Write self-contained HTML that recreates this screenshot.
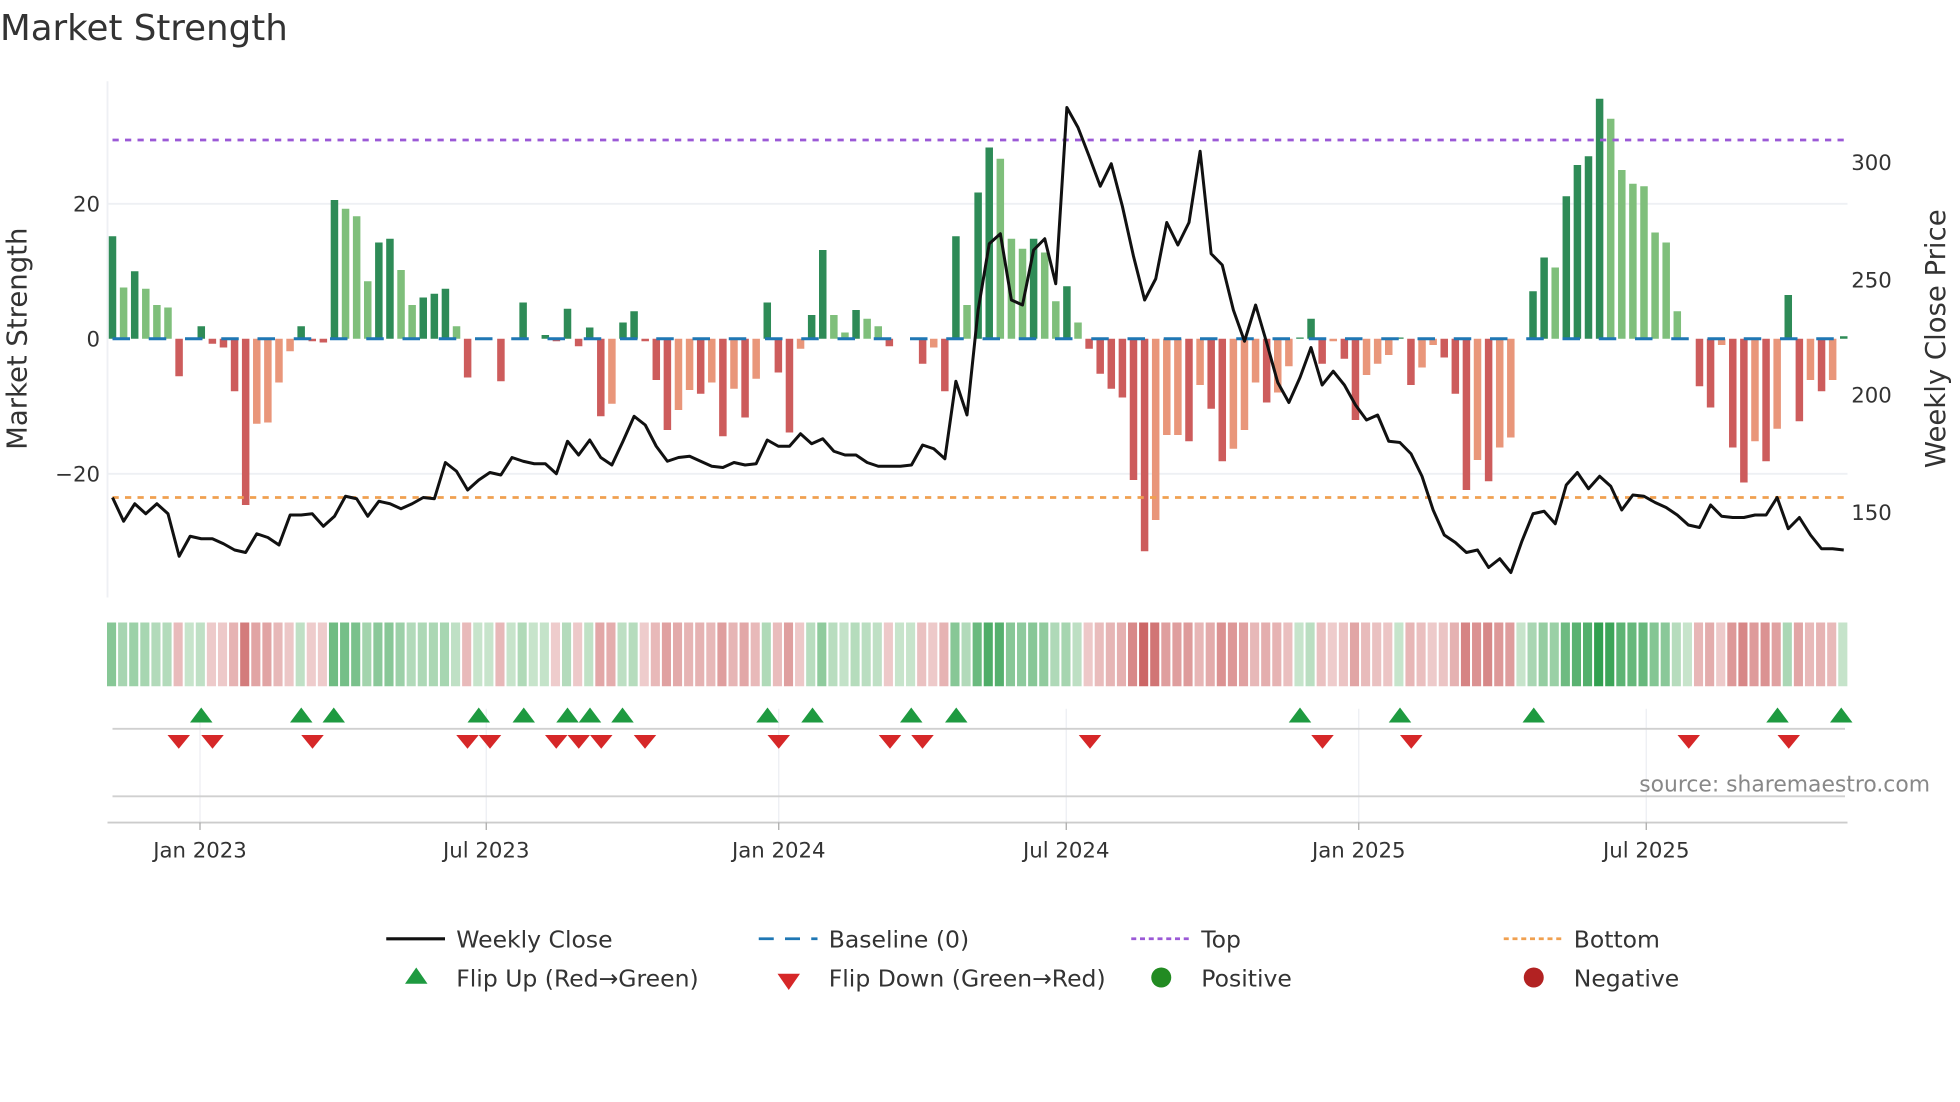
<!DOCTYPE html>
<html><head><meta charset="utf-8"><style>
html,body{margin:0;padding:0;background:#fff;}
svg{display:block;font-family:"DejaVu Sans","Liberation Sans",sans-serif;}
</style></head><body>
<svg id="s" width="1960" height="1102" viewBox="0 0 1568 881.6" preserveAspectRatio="none" xmlns="http://www.w3.org/2000/svg">
<text x="0" y="32" font-size="28.5" fill="#333">Market Strength</text>
<line x1="86" y1="65" x2="86" y2="478" stroke="#eef0f4" stroke-width="1.5"/>
<line x1="86" y1="163" x2="1478" y2="163" stroke="#eef0f4" stroke-width="1.5"/>
<line x1="86" y1="379" x2="1478" y2="379" stroke="#eef0f4" stroke-width="1.5"/>
<g font-size="17" fill="#333" text-anchor="end">
<text x="80" y="169">20</text><text x="80" y="277">0</text><text x="80" y="385">−20</text>
</g>
<g font-size="17" fill="#333">
<text x="1481" y="136">300</text><text x="1481" y="230">250</text><text x="1481" y="322">200</text><text x="1481" y="416">150</text>
</g>
<text transform="translate(21,271) rotate(-90)" font-size="22" fill="#333" text-anchor="middle">Market Strength</text>
<text transform="translate(1556,271) rotate(-90)" font-size="22" fill="#333" text-anchor="middle">Weekly Close Price</text>
<g id="bars"></g>
<line x1="90" y1="271" x2="1476" y2="271" stroke="#1f77b4" stroke-width="2.4" stroke-dasharray="14,15"/>
<line x1="90" y1="112" x2="1476" y2="112" stroke="#9b59d6" stroke-width="2.2" stroke-dasharray="5,5"/>
<line x1="90" y1="398" x2="1476" y2="398" stroke="#f0a050" stroke-width="2.2" stroke-dasharray="5,5"/>
<polyline id="close" fill="none" stroke="#111" stroke-width="2.4" stroke-linejoin="round"/>
<g id="heat"></g>
<g stroke="#eceef2" stroke-width="1">
<line x1="160" y1="567" x2="160" y2="658"/><line x1="389" y1="567" x2="389" y2="658"/><line x1="623" y1="567" x2="623" y2="658"/><line x1="853" y1="567" x2="853" y2="658"/><line x1="1087" y1="567" x2="1087" y2="658"/><line x1="1317" y1="567" x2="1317" y2="658"/>
</g>
<line x1="90" y1="583" x2="1476" y2="583" stroke="#d0d0d0" stroke-width="1.5"/>
<line x1="90" y1="637" x2="1476" y2="637" stroke="#d0d0d0" stroke-width="1.5"/>
<line x1="86" y1="658" x2="1478" y2="658" stroke="#ccc" stroke-width="1.5"/>
<g id="marks"></g>
<text x="1544" y="633" font-size="17.5" fill="#888" text-anchor="end">source: sharemaestro.com</text>
<g stroke="#aaa" stroke-width="1"><line x1="160" y1="658" x2="160" y2="664"/><line x1="389" y1="658" x2="389" y2="664"/><line x1="623" y1="658" x2="623" y2="664"/><line x1="853" y1="658" x2="853" y2="664"/><line x1="1087" y1="658" x2="1087" y2="664"/><line x1="1317" y1="658" x2="1317" y2="664"/></g>
<g font-size="17" fill="#333" text-anchor="middle">
<text x="160" y="686">Jan 2023</text><text x="389" y="686">Jul 2023</text><text x="623" y="686">Jan 2024</text><text x="853" y="686">Jul 2024</text><text x="1087" y="686">Jan 2025</text><text x="1317" y="686">Jul 2025</text>
</g>
<g font-size="18.8" fill="#333">
<line x1="309" y1="751" x2="356" y2="751" stroke="#111" stroke-width="2.5"/><text x="365" y="758">Weekly Close</text>
<line x1="607" y1="751" x2="654" y2="751" stroke="#1f77b4" stroke-width="2.2" stroke-dasharray="12,9"/><text x="663" y="758">Baseline (0)</text>
<line x1="905" y1="751" x2="952" y2="751" stroke="#9b59d6" stroke-width="2.2" stroke-dasharray="4,3"/><text x="961" y="758">Top</text>
<line x1="1203" y1="751" x2="1250" y2="751" stroke="#f0a050" stroke-width="2.2" stroke-dasharray="4,3"/><text x="1259" y="758">Bottom</text>
<polygon points="333,774 342,787 324,787" fill="#1e9a40"/><text x="365" y="789">Flip Up (Red→Green)</text>
<polygon points="622,779 640,779 631,792" fill="#d62728"/><text x="663" y="789">Flip Down (Green→Red)</text>
<circle cx="929" cy="782" r="8" fill="#228b22"/><text x="961" y="789">Positive</text>
<circle cx="1227" cy="782" r="8" fill="#b22222"/><text x="1259" y="789">Negative</text>
</g>
</svg>
<script>
var B=[[82,'G'],[41,'g'],[54,'G'],[40,'g'],[27,'g'],[25,'g'],[-30,'R'],[0,'G'],[10,'G'],[-4,'R'],[-7,'R'],[-42,'R'],[-133,'R'],[-68,'r'],[-67,'r'],[-35,'r'],[-10,'r'],[10,'G'],[-2,'R'],[-3,'R'],[111,'G'],[104,'g'],[98,'g'],[46,'g'],[77,'G'],[80,'G'],[55,'g'],[27,'g'],[33,'G'],[36,'G'],[40,'G'],[10,'g'],[-31,'R'],[0,'G'],[0,'G'],[-34,'R'],[0,'G'],[29,'G'],[0,'G'],[3,'G'],[-2,'R'],[24,'G'],[-6,'R'],[9,'G'],[-62,'R'],[-52,'r'],[13,'G'],[22,'G'],[-2,'R'],[-33,'R'],[-73,'R'],[-57,'r'],[-41,'r'],[-44,'R'],[-35,'r'],[-78,'R'],[-40,'r'],[-63,'R'],[-32,'r'],[29,'G'],[-27,'R'],[-75,'R'],[-8,'r'],[19,'G'],[71,'G'],[19,'g'],[5,'g'],[23,'G'],[16,'g'],[10,'g'],[-6,'R'],[0,'G'],[0,'G'],[-20,'R'],[-7,'r'],[-42,'R'],[82,'G'],[27,'g'],[117,'G'],[153,'G'],[144,'g'],[80,'g'],[72,'g'],[80,'G'],[69,'g'],[30,'g'],[42,'G'],[13,'g'],[-8,'R'],[-28,'R'],[-40,'R'],[-47,'R'],[-113,'R'],[-170,'R'],[-145,'r'],[-77,'r'],[-77,'r'],[-82,'R'],[-37,'r'],[-56,'R'],[-98,'R'],[-88,'r'],[-73,'r'],[-35,'r'],[-51,'R'],[-43,'r'],[-22,'r'],[1,'G'],[16,'G'],[-20,'R'],[-2,'r'],[-16,'R'],[-65,'R'],[-29,'r'],[-20,'r'],[-13,'r'],[1,'G'],[-37,'R'],[-23,'r'],[-5,'r'],[-15,'R'],[-44,'R'],[-121,'R'],[-97,'r'],[-114,'R'],[-87,'r'],[-79,'r'],[0,'G'],[38,'G'],[65,'G'],[57,'g'],[114,'G'],[139,'G'],[146,'G'],[192,'G'],[176,'g'],[135,'g'],[124,'g'],[122,'g'],[85,'g'],[77,'g'],[22,'g'],[0,'G'],[-38,'R'],[-55,'R'],[-5,'r'],[-87,'R'],[-115,'R'],[-82,'r'],[-98,'R'],[-72,'r'],[35,'G'],[-66,'R'],[-33,'r'],[-42,'R'],[-33,'r'],[2,'G']];
var col={G:'#2e8b57',g:'#7fbf7b',R:'#cd5c5c',r:'#e9967a'};
var n=B.length,x0=90,x1=1475,st=(x1-x0)/(n-1);
var bars=document.getElementById('bars'),heat=document.getElementById('heat'),h='',hh='';
function mix(a,b,t){return 'rgb('+a.map(function(v,i){return Math.round(v+(b[i]-v)*t)}).join(',')+')';}
for(var i=0;i<n;i++){var x=x0+i*st,v=B[i][0];
 if(v>0)h+='<rect x="'+(x-3)+'" y="'+(271-v)+'" width="6" height="'+v+'" fill="'+col[B[i][1]]+'"/>';
 else if(v<0)h+='<rect x="'+(x-3)+'" y="271" width="6" height="'+(-v)+'" fill="'+col[B[i][1]]+'"/>';
 var t=Math.min(1,Math.abs(v)/190)*0.85+0.15;
 var c=v>=0?mix([225,240,225],[50,160,80],t):mix([245,225,225],[200,90,90],t);
 hh+='<rect x="'+(x-4.4)+'" y="498" width="'+(st-1.6)+'" height="51" fill="'+c+'"/>';}
bars.innerHTML=h;heat.innerHTML=hh;
var P=[398,417,403,411,403,411,445,429,431,431,435,440,442,427,430,436,412,412,411,421,413,397,399,413,401,403,407,403,398,399,370,377,392,384,378,380,366,369,371,371,379,353,364,352,366,372,353,333,340,357,369,366,365,369,373,374,370,372,371,352,357,357,347,355,351,361,364,364,370,373,373,373,372,356,359,367,305,332,248,195,187,240,244,200,191,227,86,102,125,149,131,165,205,240,223,178,196,178,121,203,212,248,273,244,274,306,322,302,278,308,297,308,324,336,332,353,354,363,381,408,428,434,442,440,454,447,458,433,411,409,419,388,378,391,381,389,408,396,397,402,406,412,420,422,404,413,414,414,412,412,398,423,414,428,439,439,440];
var m=P.length,pst=(1475-90)/(m-1),pts=[];
for(var j=0;j<m;j++)pts.push((90+j*pst).toFixed(1)+','+P[j]);
document.getElementById('close').setAttribute('points',pts.join(' '));
var U=[161,241,267,383,419,454,472,498,614,650,729,765,1040,1120,1227,1422,1473],D=[143,170,250,374,392,445,463,481,516,623,712,738,872,1058,1129,1351,1431],mm='';
U.forEach(function(x){mm+='<polygon points="'+x+',566 '+(x+9)+',578 '+(x-9)+',578" fill="#1e9a40"/>';});
D.forEach(function(x){mm+='<polygon points="'+(x-9)+',588 '+(x+9)+',588 '+x+',599" fill="#d62728"/>';});
document.getElementById('marks').innerHTML=mm;
</script>
</body></html>
